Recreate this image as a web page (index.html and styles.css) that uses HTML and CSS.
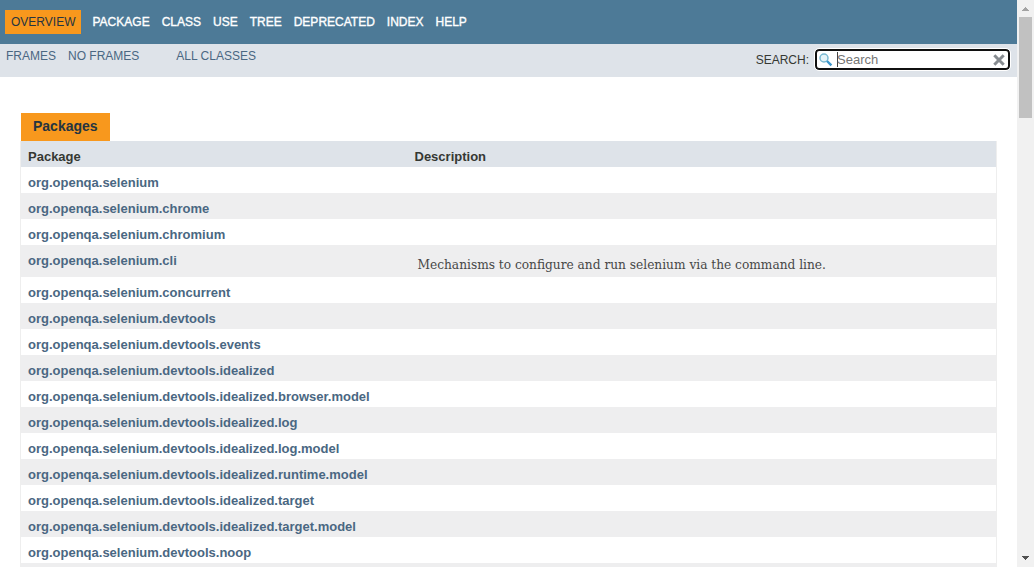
FILE: index.html
```html
<!DOCTYPE html>
<html lang="en">
<head>
<meta charset="utf-8">
<title>Overview</title>
<link rel="stylesheet" href="styles.css">
</head>
<body>
<div class="page">
  <main class="content">
    <nav class="top-nav">
      <span class="current">OVERVIEW</span>
      <a>PACKAGE</a><a>CLASS</a><a>USE</a><a>TREE</a><a>DEPRECATED</a><a>INDEX</a><a>HELP</a>
    </nav>
    <div class="sub-nav">
      <div class="sub-links"><a>FRAMES</a><a>NO FRAMES</a><a class="all">ALL CLASSES</a></div>
      <div class="search">
        <span class="search-label">SEARCH:</span>
        <div class="search-box">
          <svg class="glass" width="14" height="14" viewBox="0 0 14 14"><circle cx="5" cy="5" r="4" fill="#e4f3f8" stroke="#79b9d2" stroke-width="1.5"/><path d="M8 8l4.4 4.4" stroke="#3d96cb" stroke-width="2.4"/></svg>
          <span class="caret"></span><span class="placeholder">Search</span>
          <svg class="clear" width="12" height="12" viewBox="0 0 12 12"><path d="M1.3 1.3l9.4 9.4M10.7 1.3l-9.4 9.4" stroke="#868b90" stroke-width="3"/></svg>
        </div>
      </div>
    </div>
    <section class="packages">
      <div class="caption">Packages</div>
      <div class="table">
        <div class="row head"><span>Package</span><span>Description</span></div>
        <div class="row"><a>org.openqa.selenium</a></div>
        <div class="row alt"><a>org.openqa.selenium.chrome</a></div>
        <div class="row"><a>org.openqa.selenium.chromium</a></div>
        <div class="row alt tall"><a>org.openqa.selenium.cli</a><span class="description">Mechanisms to configure and run selenium via the command line.</span></div>
        <div class="row"><a>org.openqa.selenium.concurrent</a></div>
        <div class="row alt"><a>org.openqa.selenium.devtools</a></div>
        <div class="row"><a>org.openqa.selenium.devtools.events</a></div>
        <div class="row alt"><a>org.openqa.selenium.devtools.idealized</a></div>
        <div class="row"><a>org.openqa.selenium.devtools.idealized.browser.model</a></div>
        <div class="row alt"><a>org.openqa.selenium.devtools.idealized.log</a></div>
        <div class="row"><a>org.openqa.selenium.devtools.idealized.log.model</a></div>
        <div class="row alt"><a>org.openqa.selenium.devtools.idealized.runtime.model</a></div>
        <div class="row"><a>org.openqa.selenium.devtools.idealized.target</a></div>
        <div class="row alt"><a>org.openqa.selenium.devtools.idealized.target.model</a></div>
        <div class="row"><a>org.openqa.selenium.devtools.noop</a></div>
        <div class="row alt"></div>
      </div>
    </section>
  </main>
  <div class="scrollbar">
    <svg class="arrow" width="7" height="4" viewBox="0 0 7 4" shape-rendering="crispEdges"><path d="M3 0h1v1h1v1h1v1h1v1H0V3h1V2h1V1h1z" fill="#a3a3a3"/></svg>
    <div class="thumb"></div>
    <svg class="arrow down" width="7" height="4" viewBox="0 0 7 4" shape-rendering="crispEdges"><path d="M0 0h7v1H6v1H5v1H4v1H3V3H2V2H1V1H0z" fill="#505050"/></svg>
  </div>
</div>
</body>
</html>
```
FILE: styles.css
```css
* { box-sizing: border-box; }
body {
  margin: 0;
  overflow: hidden;
  background: #fff;
  color: #353833;
  font-family: "Liberation Sans", Arial, sans-serif;
  font-size: 13px;
}
.page { display: flex; height: 567px; }
.content { flex: 1; min-width: 0; overflow: hidden; }
.top-nav {
  display: flex;
  gap: 12px;
  height: 44px;
  padding: 10px 5px;
  background: #4d7a97;
  color: #fff;
  font-size: 12px;
  line-height: 24px;
}
.top-nav a { -webkit-text-stroke: 0.35px #fff; }
.current {
  width: 76px;
  padding-left: 6px;
  margin-right: -0.5px;
  background: #f8981d;
  color: #253441;
}
.sub-nav {
  display: flex;
  justify-content: space-between;
  height: 33px;
  padding: 5px 7px 0 6px;
  background: #dee3e9;
  font-size: 12px;
}
.sub-links { display: flex; gap: 12px; color: #4a6782; line-height: 14px; }
.all { margin-left: 25px; }
.search { display: flex; gap: 6px; line-height: 22px; }
.search-box {
  display: flex;
  align-items: center;
  width: 195px;
  height: 21px;
  padding: 0 3px 0 2px;
  border: 2px solid #101010;
  border-radius: 4px;
  outline: 1px solid #fff;
  background: #fff;
}
.glass { margin: 1px 4px 0 0; }
.caret { width: 1px; height: 15px; margin-right: -1px; background: #444; }
.placeholder { flex: 1; color: #757575; font-size: 13px; line-height: 17px; }
.packages { padding: 36px 20px 0; }
.caption {
  width: 89px;
  height: 28px;
  margin-left: 1px;
  padding-left: 12px;
  background: #f8981d;
  color: #253441;
  font-size: 14px;
  font-weight: bold;
  line-height: 27px;
}
.table { border: solid #eee; border-width: 0 1px; }
.row {
  display: grid;
  grid-template-columns: 386.5px 1fr;
  height: 26px;
  padding-left: 7px;
  color: #4a6782;
  font-weight: bold;
  line-height: 31px;
}
.head { background: #dee3e9; color: #353833; }
.alt { background: #eeeeef; }
.tall { height: 32px; }
.description {
  padding-left: 3px;
  color: #474747;
  font-family: "DejaVu Serif Condensed", "DejaVu Serif", serif;
  font-size: 13.55px;
  font-weight: normal;
  line-height: 38px;
  white-space: nowrap;
}
.scrollbar {
  display: flex;
  flex-direction: column;
  align-items: center;
  width: 17px;
  padding: 7px 0;
  background: #f1f1f1;
}
.thumb { width: 13px; height: 101px; margin-top: 6px; background: #c1c1c1; }
.down { margin-top: auto; }
```
